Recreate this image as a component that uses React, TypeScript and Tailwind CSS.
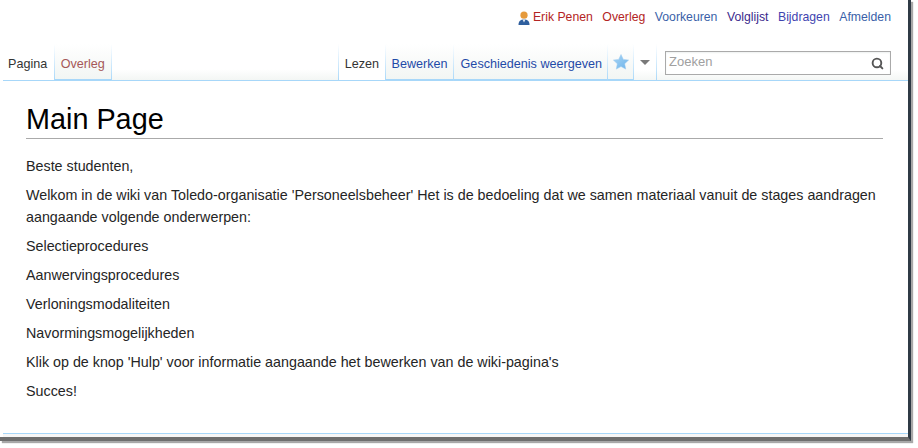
import { Search } from "lucide-react";

const font = "font-['Liberation_Sans',Arial,sans-serif]";

function Divider() {
  return <div className="h-full w-px shrink-0 bg-gradient-to-b from-white to-[#a7d7f9]" />;
}

function Tab({ label, active, className }: { label: string; active?: boolean; className: string }) {
  return (
    <div className="flex h-[37px]">
      <div className={`flex flex-col ${active ? "bg-white" : "bg-gradient-to-b from-white to-[#f1f5f3]"}`}>
        <span className={`flex h-[35px] items-center pt-[6px] text-[12.6px] ${className}`}>{label}</span>
        <div className={active ? "h-[1px] bg-white" : "h-[1px] bg-[#a7d7f9]"} />
        <div className="h-[1px] bg-[#a7d7f9]" />
      </div>
      <Divider />
    </div>
  );
}

const paragraphs = [
  "Selectieprocedures",
  "Aanwervingsprocedures",
  "Verloningsmodaliteiten",
  "Navormingsmogelijkheden",
  "Klik op de knop 'Hulp' voor informatie aangaande het bewerken van de wiki-pagina's",
  "Succes!",
];

export default function App() {
  return (
    <div className={`h-[448px] w-[918px] overflow-hidden bg-white ${font}`}>
      <div className="flex h-[441px] w-[911px] flex-col border-r-[3px] border-b-[4px] border-r-[#2f3a45] border-b-[#6e6e6e] shadow-[2px_2px_1px_#a8a8a8]">
        {/* Personal links */}
        <div className="flex h-[44px] shrink-0 items-start justify-end gap-[9.5px] pt-[10px] pr-[17px] text-[12.25px] leading-[15px]">
          <span className="flex items-center gap-[3px] text-[#b32424]">
            <svg width="12" height="14" viewBox="0 0 12 14">
              <path d="M0.5 14c0-4 2-5.500 5.500-5.500s5.500 1.500 5.500 5.500z" fill="#2f5f9e" />
              <path d="M4.500 8.500h3l-1.500 3z" fill="#dfe7f2" />
              <circle cx="6" cy="4.200" r="3.600" fill="#e59a3c" />
            </svg>
            Erik Penen
          </span>
          <span className="text-[#b32424]">Overleg</span>
          <span className="text-[#3a5fa8]">Voorkeuren</span>
          <span className="text-[#3b2a8c]">Volglijst</span>
          <span className="text-[#3f44b0]">Bijdragen</span>
          <span className="text-[#3a5fa8]">Afmelden</span>
        </div>

        {/* Tabs */}
        <div className="flex h-[37px] shrink-0 pl-[3px]">
          <Tab label="Pagina" active className="pr-[6.5px] pl-[5px] text-[#333333]" />
          <Tab label="Overleg" className="px-[6px] text-[#a55858]" />
          <div className="flex h-full flex-1 flex-col">
            <div className="flex-1 bg-gradient-to-b from-white from-70% to-[#f3f6f4]" />
            <div className="h-[1px] bg-[#a7d7f9]" />
          </div>
          <Divider />
          <Tab label="Lezen" active className="px-[5.5px] text-[#333333]" />
          <Tab label="Bewerken" className="pr-[5px] pl-[6px] text-[#1f4aa8]" />
          <Tab label="Geschiedenis weergeven" className="pr-[5px] pl-[7px] text-[#1f4aa8]" />
          <div className="flex h-full w-[25px] flex-col bg-gradient-to-b from-white to-[#f1f5f3]">
            <div className="flex flex-1 items-center justify-center">
              <svg width="16" height="16" viewBox="0 0 16 16">
                <defs>
                  <linearGradient id="star" x1="0" y1="0" x2="1" y2="1">
                    <stop offset="0" stopColor="#a9d6f5" />
                    <stop offset="1" stopColor="#6db3ea" />
                  </linearGradient>
                </defs>
                <path
                  d="M8 0.500l2.300 4.900 5.300 0.700-3.900 3.700 1 5.300L8 12.500l-4.700 2.600 1-5.300L0.400 6.100l5.300-0.700z"
                  fill="url(#star)"
                  stroke="#9ccbf0"
                  strokeWidth="0.500"
                  strokeLinejoin="round"
                />
              </svg>
            </div>
            <div className="h-[2px] bg-[#a7d7f9]" />
          </div>
          <Divider />
          <div className="flex h-full w-[22px] flex-col bg-gradient-to-b from-white from-70% to-[#f3f6f4]">
            <div className="flex flex-1 items-center justify-center">
              <div className="h-0 w-0 border-x-[5px] border-t-[5px] border-x-transparent border-t-[#797979]" />
            </div>
            <div className="h-[1px] bg-[#a7d7f9]" />
          </div>
          <Divider />
          <div className="flex h-full w-[251px] flex-col bg-gradient-to-b from-white from-70% to-[#f3f6f4]">
            <div className="flex flex-1 items-start pt-[7px] pl-[8px]">
              <div className="flex h-[24px] w-[226px] items-center justify-between border border-[#aaaaaa] bg-white pr-[3px] pb-[2px] pl-[3px] text-[13px] text-[#a0a0a0] shadow-[inset_0_1px_2px_#eef1f0]">
                Zoeken
                <Search size={13} strokeWidth={3.5} className="mt-[2px] mr-[3px] text-[#555555]" />
              </div>
            </div>
            <div className="h-[1px] bg-[#a7d7f9]" />
          </div>
        </div>

        {/* Content */}
        <div className="min-h-0 flex-1 pt-[20px] pr-[25px] pl-[26px] text-[14.3px] leading-[22px] text-[#252525]">
          <h1 className="border-b border-[#aaaaaa] pb-[1px] text-[28.800px] leading-[36px] font-normal text-black">
            Main Page
          </h1>
          <p className="mt-[16px]">Beste studenten,</p>
          <p className="mt-[7px]">
            Welkom in de wiki van Toledo-organisatie 'Personeelsbeheer' Het is de bedoeling dat we samen materiaal
            vanuit de stages aandragen aangaande volgende onderwerpen:
          </p>
          {paragraphs.map((text) => (
            <p key={text} className="mt-[7px]">
              {text}
            </p>
          ))}
        </div>

        {/* Footer edge */}
        <div className="ml-[3px] h-[4px] shrink-0 border-t border-[#a7d7f9] bg-[#f6f6f6]" />
      </div>
    </div>
  );
}
